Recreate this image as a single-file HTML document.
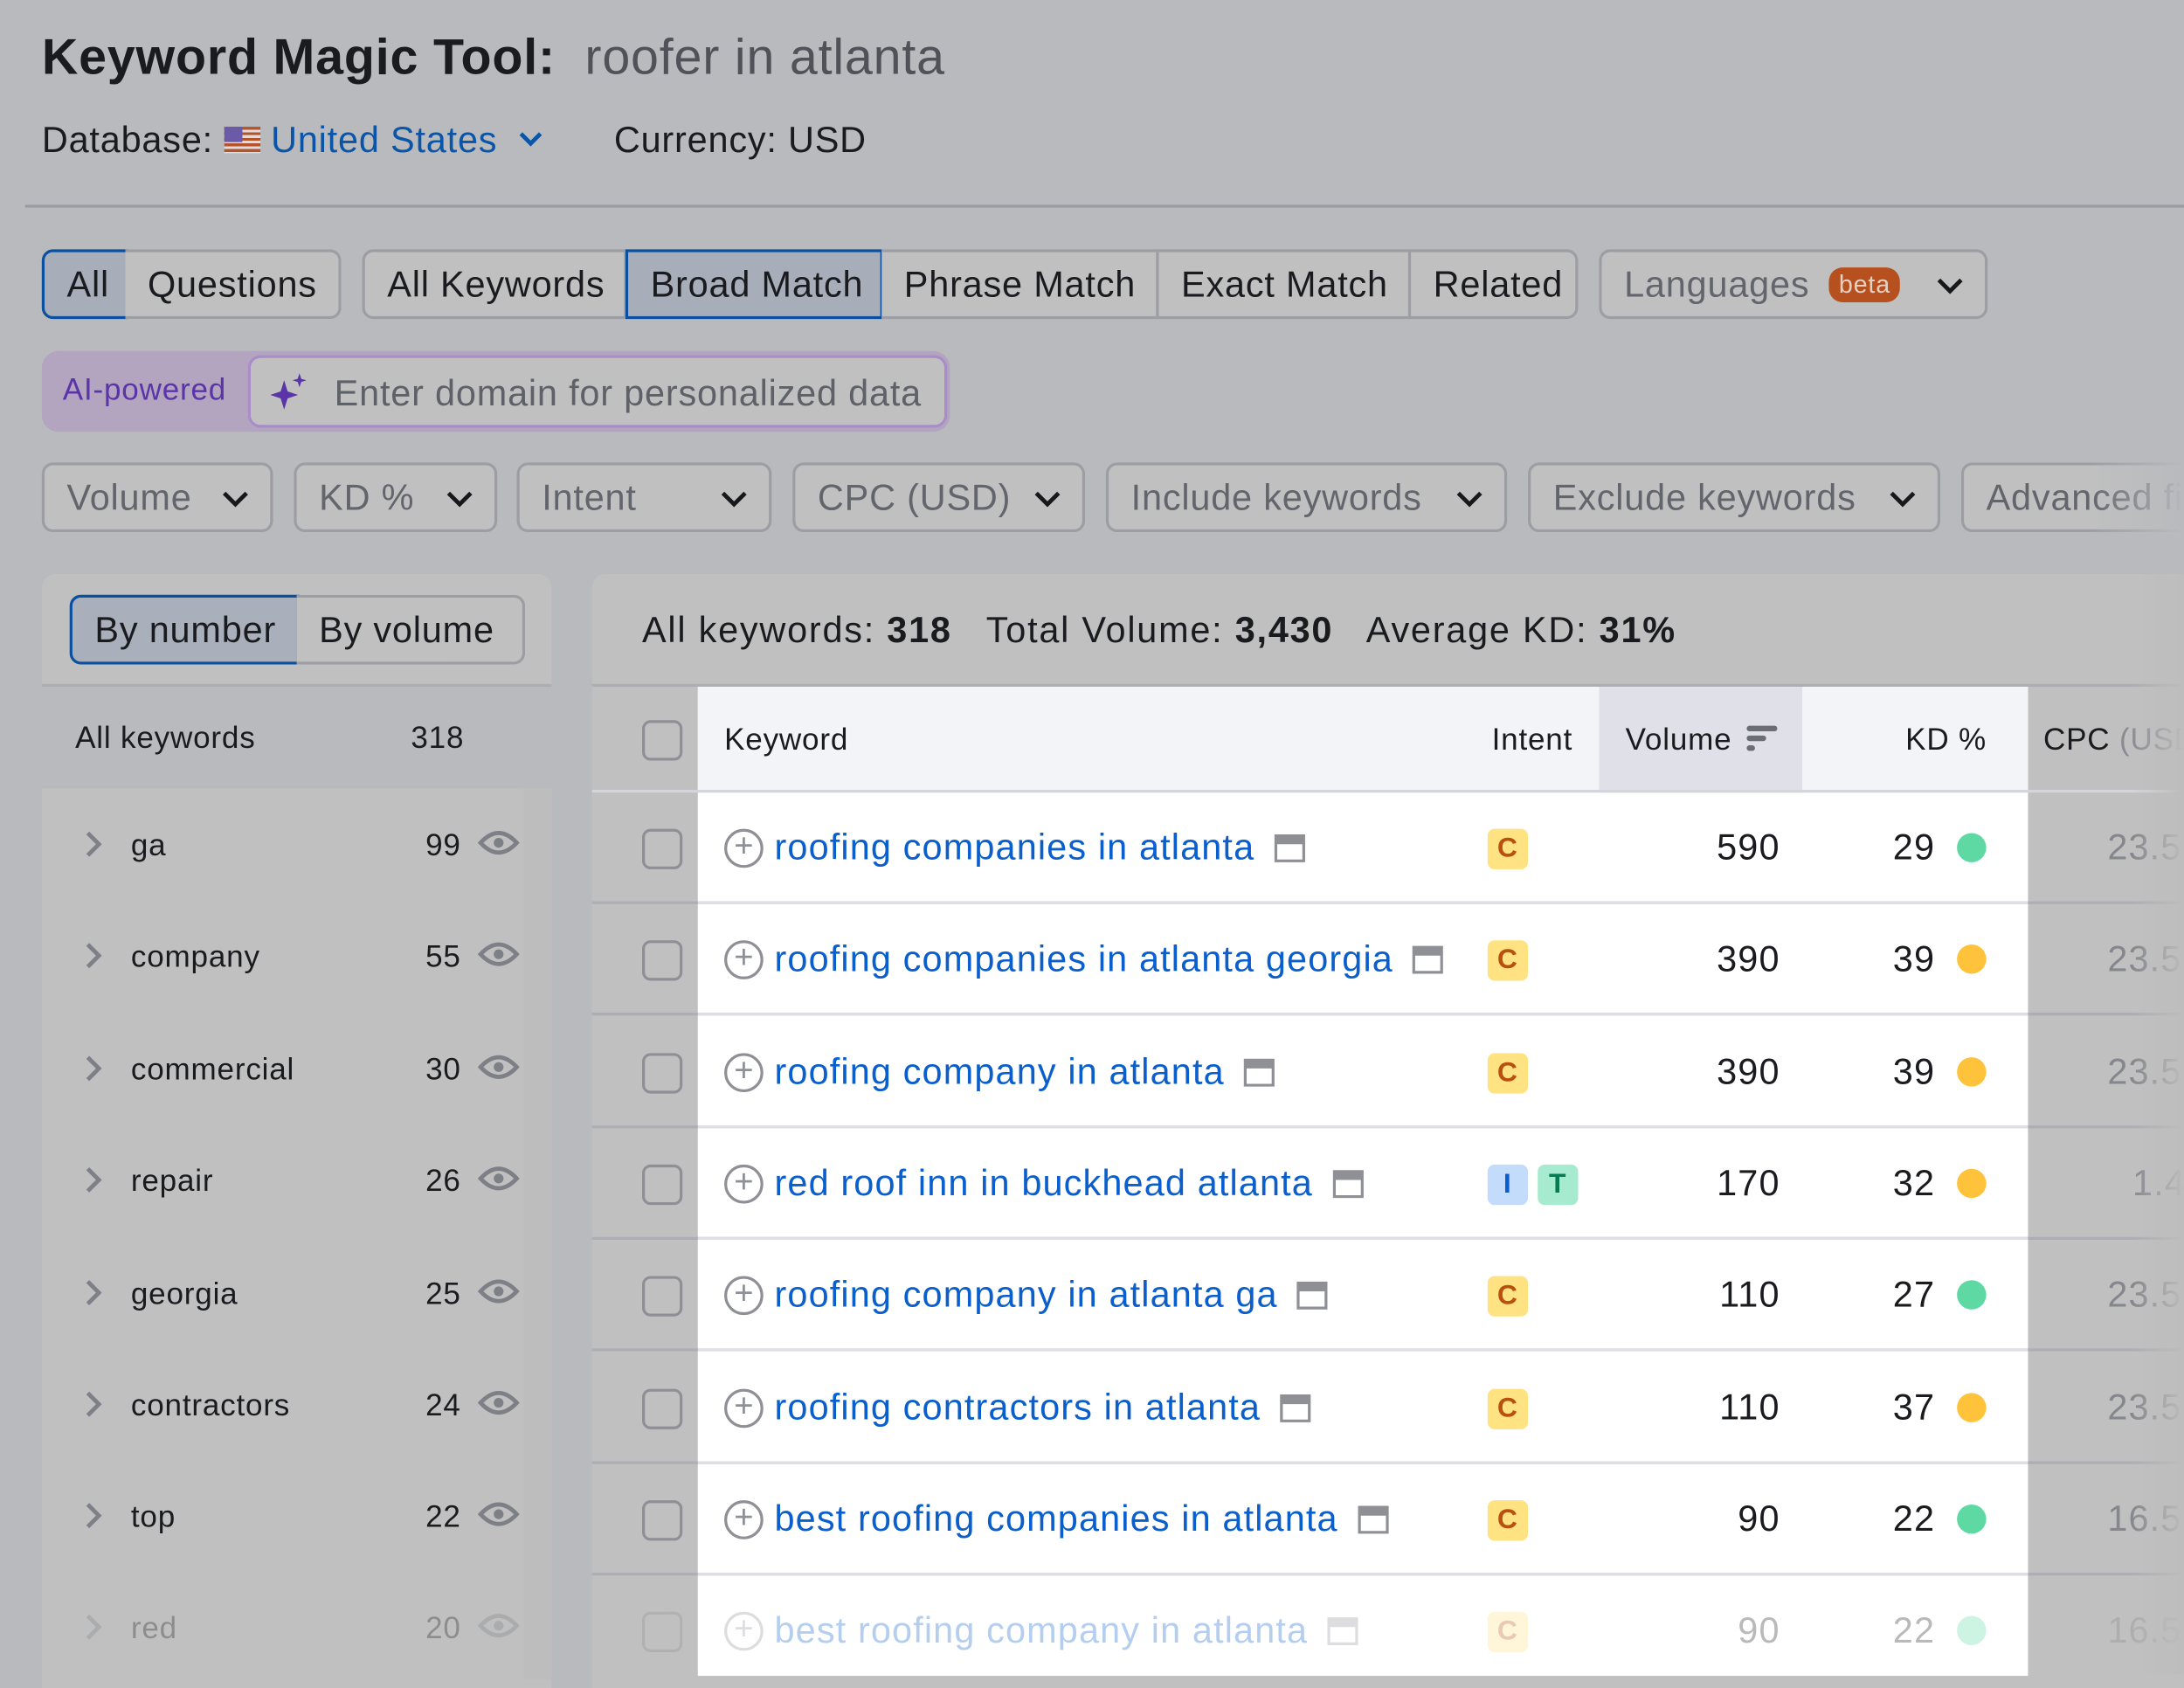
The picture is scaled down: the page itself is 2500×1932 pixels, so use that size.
<!DOCTYPE html>
<html><head><meta charset="utf-8"><style>
*{box-sizing:border-box;margin:0;padding:0}
html,body{width:2500px;height:1905px;overflow:hidden;background:#b9babe}
#s{position:absolute;left:0;top:0;width:1568px;height:1195px;transform:scale(1.5944);transform-origin:0 0;font-family:"Liberation Sans",sans-serif;color:#1a1b1f;letter-spacing:0.5px}
.a{position:absolute}
.btn{position:absolute;height:50px;border:2px solid #9d9ea3;background:#c0c0c0;border-radius:8px;font-size:26px;display:flex;align-items:center;padding-left:16px;white-space:nowrap}
.g{color:#63656d}
.chev{position:absolute;right:14px;top:17px}
.row{position:absolute;left:425px;width:1143px;height:80px;border-bottom:2px solid #adaeb3}
.lrow{position:absolute;left:30px;width:346px;height:80px;font-size:22px}
.ln{position:absolute;left:76px;width:955px;height:2px;bottom:-2px;background:#dfe0e5}
</style></head><body><div id="s">
<div class="a" style="left:30px;top:20px;font-size:36px;font-weight:bold;white-space:nowrap">Keyword Magic Tool:&nbsp; <span style="font-weight:normal;color:#505259">roofer in atlanta</span></div>
<div class="a" style="left:30px;top:85px;font-size:26px;white-space:nowrap">Database: <span style="display:inline-block;width:26px;height:19px;background:repeating-linear-gradient(#b5532a 0 2px,#ddd 2px 4px);position:relative;vertical-align:-1px"><span style="position:absolute;left:0;top:0;width:13px;height:11px;background:#6a5aa8"></span></span> <span style="color:#0a55a8">United States</span> <svg width="20" height="14" viewBox="0 0 20 14" style="vertical-align:2px;margin-left:6px"><polyline points="3,3 10,10 17,3" fill="none" stroke="#0a55a8" stroke-width="3"/></svg><span style="margin-left:50px">Currency: USD</span></div>
<div class="a" style="left:18px;top:147px;width:1550px;height:2px;background:#9a9ba0"></div>

<div class="btn" style="left:30px;top:179px;width:62px;background:#a7adb9;border-color:#0b4fa0;border-radius:8px 0 0 8px">All</div>
<div class="btn" style="left:90px;top:179px;width:155px;border-left:none;border-radius:0 8px 8px 0">Questions</div>
<div class="btn" style="left:260px;top:179px;width:190px;border-radius:8px 0 0 8px">All Keywords</div>
<div class="btn" style="left:449px;top:179px;width:185px;background:#a7adb9;border-color:#0b4fa0;border-radius:0">Broad Match</div>
<div class="btn" style="left:633px;top:179px;width:199px;border-left:none;border-radius:0">Phrase Match</div>
<div class="btn" style="left:830px;top:179px;width:183px;border-radius:0">Exact Match</div>
<div class="btn" style="left:1011px;top:179px;width:122px;border-radius:0 8px 8px 0">Related</div>
<div class="btn g" style="left:1148px;top:179px;width:279px">Languages<span style="background:#b6501e;color:#e6d0c2;font-size:18px;border-radius:10px;padding:2px 7px;margin-left:14px">beta</span><svg class="chev" width="22" height="14" viewBox="0 0 22 14"><polyline points="3,3 11,11 19,3" fill="none" stroke="#17181c" stroke-width="3"/></svg></div>

<div class="a" style="left:30px;top:252px;width:652px;height:58px;background:#b3a4c0;border-radius:12px"></div>
<div class="a" style="left:45px;top:267px;font-size:22px;color:#5b34a8">AI-powered</div>
<div class="a" style="left:178px;top:255px;width:502px;height:52px;background:#c0c0c0;border:2px solid #a98dc8;border-radius:9px;font-size:26px;color:#5f6168;padding:10px 0 0 60px;white-space:nowrap">Enter domain for personalized data
<svg class="a" style="left:14px;top:10px" width="30" height="30" viewBox="0 0 30 30"><path d="M10 6 L12.5 14 L20 16.5 L12.5 19 L10 27 L7.5 19 L0 16.5 L7.5 14Z" fill="#5b34a8"/><path d="M21 1 L22.3 5 L26 6 L22.3 7.2 L21 11 L19.7 7.2 L16 6 L19.7 5Z" fill="#5b34a8"/></svg></div>

<div class="btn g" style="left:30px;top:332px;width:166px">Volume<svg class="chev" width="22" height="14" viewBox="0 0 22 14"><polyline points="3,3 11,11 19,3" fill="none" stroke="#17181c" stroke-width="3"/></svg></div>
<div class="btn g" style="left:211px;top:332px;width:146px">KD %<svg class="chev" width="22" height="14" viewBox="0 0 22 14"><polyline points="3,3 11,11 19,3" fill="none" stroke="#17181c" stroke-width="3"/></svg></div>
<div class="btn g" style="left:371px;top:332px;width:183px">Intent<svg class="chev" width="22" height="14" viewBox="0 0 22 14"><polyline points="3,3 11,11 19,3" fill="none" stroke="#17181c" stroke-width="3"/></svg></div>
<div class="btn g" style="left:569px;top:332px;width:210px">CPC (USD)<svg class="chev" width="22" height="14" viewBox="0 0 22 14"><polyline points="3,3 11,11 19,3" fill="none" stroke="#17181c" stroke-width="3"/></svg></div>
<div class="btn g" style="left:794px;top:332px;width:288px">Include keywords<svg class="chev" width="22" height="14" viewBox="0 0 22 14"><polyline points="3,3 11,11 19,3" fill="none" stroke="#17181c" stroke-width="3"/></svg></div>
<div class="btn g" style="left:1097px;top:332px;width:296px">Exclude keywords<svg class="chev" width="22" height="14" viewBox="0 0 22 14"><polyline points="3,3 11,11 19,3" fill="none" stroke="#17181c" stroke-width="3"/></svg></div>
<div class="btn g" style="left:1408px;top:332px;width:200px;border-right:none">Advanced fi</div>
<div class="a" style="left:1500px;top:330px;width:68px;height:56px;background:linear-gradient(90deg,rgba(185,186,190,0),#b9babe)"></div>

<!-- left panel -->
<div class="a" style="left:30px;top:412px;width:366px;height:800px;background:#c0c0c0;border-radius:10px 10px 0 0"></div>
<div class="btn" style="left:50px;top:427px;width:165px;background:#a9b0bb;border-color:#0b4fa0;border-radius:8px 0 0 8px">By number</div>
<div class="btn" style="left:213px;top:427px;width:164px;border-left:none;border-radius:0 8px 8px 0">By volume</div>
<div class="a" style="left:30px;top:491px;width:366px;height:2px;background:#adaeb3"></div>
<div class="a" style="left:30px;top:493px;width:366px;height:73px;background:#b9babe"></div>
<div class="a" style="left:54px;top:517px;font-size:22px">All keywords</div>
<div class="a" style="left:295px;top:517px;font-size:22px">318</div>
<div class="a" style="left:376px;top:566px;width:20px;height:640px;background:#bdbdbd"></div>

<div class="lrow" style="top:566px"><svg class="a" style="left:30px;top:30px" width="14" height="20"><polyline points="3,2 11,10 3,18" fill="none" stroke="#7e8087" stroke-width="3"/></svg><span class="a" style="left:64px;top:28px">ga</span><span class="a" style="right:45px;top:28px">99</span><svg class="a" style="left:313px;top:27px" width="30" height="24" viewBox="0 0 30 24"><path d="M2 12 Q15 -2 28 12 Q15 26 2 12Z" fill="none" stroke="#7e8087" stroke-width="3"/><circle cx="15" cy="12" r="3.5" fill="#7e8087"/></svg></div>
<div class="lrow" style="top:646px"><svg class="a" style="left:30px;top:30px" width="14" height="20"><polyline points="3,2 11,10 3,18" fill="none" stroke="#7e8087" stroke-width="3"/></svg><span class="a" style="left:64px;top:28px">company</span><span class="a" style="right:45px;top:28px">55</span><svg class="a" style="left:313px;top:27px" width="30" height="24" viewBox="0 0 30 24"><path d="M2 12 Q15 -2 28 12 Q15 26 2 12Z" fill="none" stroke="#7e8087" stroke-width="3"/><circle cx="15" cy="12" r="3.5" fill="#7e8087"/></svg></div>
<div class="lrow" style="top:727px"><svg class="a" style="left:30px;top:30px" width="14" height="20"><polyline points="3,2 11,10 3,18" fill="none" stroke="#7e8087" stroke-width="3"/></svg><span class="a" style="left:64px;top:28px">commercial</span><span class="a" style="right:45px;top:28px">30</span><svg class="a" style="left:313px;top:27px" width="30" height="24" viewBox="0 0 30 24"><path d="M2 12 Q15 -2 28 12 Q15 26 2 12Z" fill="none" stroke="#7e8087" stroke-width="3"/><circle cx="15" cy="12" r="3.5" fill="#7e8087"/></svg></div>
<div class="lrow" style="top:807px"><svg class="a" style="left:30px;top:30px" width="14" height="20"><polyline points="3,2 11,10 3,18" fill="none" stroke="#7e8087" stroke-width="3"/></svg><span class="a" style="left:64px;top:28px">repair</span><span class="a" style="right:45px;top:28px">26</span><svg class="a" style="left:313px;top:27px" width="30" height="24" viewBox="0 0 30 24"><path d="M2 12 Q15 -2 28 12 Q15 26 2 12Z" fill="none" stroke="#7e8087" stroke-width="3"/><circle cx="15" cy="12" r="3.5" fill="#7e8087"/></svg></div>
<div class="lrow" style="top:888px"><svg class="a" style="left:30px;top:30px" width="14" height="20"><polyline points="3,2 11,10 3,18" fill="none" stroke="#7e8087" stroke-width="3"/></svg><span class="a" style="left:64px;top:28px">georgia</span><span class="a" style="right:45px;top:28px">25</span><svg class="a" style="left:313px;top:27px" width="30" height="24" viewBox="0 0 30 24"><path d="M2 12 Q15 -2 28 12 Q15 26 2 12Z" fill="none" stroke="#7e8087" stroke-width="3"/><circle cx="15" cy="12" r="3.5" fill="#7e8087"/></svg></div>
<div class="lrow" style="top:968px"><svg class="a" style="left:30px;top:30px" width="14" height="20"><polyline points="3,2 11,10 3,18" fill="none" stroke="#7e8087" stroke-width="3"/></svg><span class="a" style="left:64px;top:28px">contractors</span><span class="a" style="right:45px;top:28px">24</span><svg class="a" style="left:313px;top:27px" width="30" height="24" viewBox="0 0 30 24"><path d="M2 12 Q15 -2 28 12 Q15 26 2 12Z" fill="none" stroke="#7e8087" stroke-width="3"/><circle cx="15" cy="12" r="3.5" fill="#7e8087"/></svg></div>
<div class="lrow" style="top:1048px"><svg class="a" style="left:30px;top:30px" width="14" height="20"><polyline points="3,2 11,10 3,18" fill="none" stroke="#7e8087" stroke-width="3"/></svg><span class="a" style="left:64px;top:28px">top</span><span class="a" style="right:45px;top:28px">22</span><svg class="a" style="left:313px;top:27px" width="30" height="24" viewBox="0 0 30 24"><path d="M2 12 Q15 -2 28 12 Q15 26 2 12Z" fill="none" stroke="#7e8087" stroke-width="3"/><circle cx="15" cy="12" r="3.5" fill="#7e8087"/></svg></div>
<div class="lrow" style="top:1128px;opacity:.3"><svg class="a" style="left:30px;top:30px" width="14" height="20"><polyline points="3,2 11,10 3,18" fill="none" stroke="#7e8087" stroke-width="3"/></svg><span class="a" style="left:64px;top:28px">red</span><span class="a" style="right:45px;top:28px">20</span><svg class="a" style="left:313px;top:27px" width="30" height="24" viewBox="0 0 30 24"><path d="M2 12 Q15 -2 28 12 Q15 26 2 12Z" fill="none" stroke="#7e8087" stroke-width="3"/><circle cx="15" cy="12" r="3.5" fill="#7e8087"/></svg></div>

<!-- right panel -->
<div class="a" style="left:425px;top:412px;width:1143px;height:800px;background:#c0c0c0;border-radius:10px 0 0 0"></div>
<div class="a" style="left:461px;top:437px;font-size:26px;white-space:nowrap;letter-spacing:1.1px">All keywords: <b>318</b>&nbsp;&nbsp; Total Volume: <b>3,430</b>&nbsp;&nbsp; Average KD: <b>31%</b></div>
<div class="a" style="left:425px;top:491px;width:1143px;height:2px;background:#adaeb3"></div>
<div class="a" style="left:501px;top:493px;width:955px;height:710px;background:#fff"></div>
<div class="a" style="left:501px;top:493px;width:955px;height:76px;background:#f3f4f8"></div>
<div class="a" style="left:1148px;top:493px;width:146px;height:76px;background:#e0e1e8"></div>
<div class="a" style="left:425px;top:567px;width:1143px;height:2px;background:#d4d5da"></div>
<div class="a" style="left:461px;top:517px;width:29px;height:29px;border:2px solid #8e9096;border-radius:6px"></div>
<div class="a" style="left:520px;top:518px;font-size:22px">Keyword</div>
<div class="a" style="left:1071px;top:518px;font-size:22px">Intent</div>
<div class="a" style="left:1167px;top:518px;font-size:22px">Volume</div>
<svg class="a" style="left:1254px;top:520px" width="24" height="20"><rect x="0" y="1" width="22" height="4" rx="2" fill="#6c6e75"/><rect x="0" y="8" width="14" height="4" rx="2" fill="#6c6e75"/><rect x="0" y="15" width="6" height="4" rx="2" fill="#6c6e75"/></svg>
<div class="a" style="left:1368px;top:518px;font-size:22px">KD %</div>
<div class="a" style="left:1467px;top:518px;font-size:22px;white-space:nowrap">CPC <span style="color:#8a8b90">(USD</span></div>

<!-- rows -->
<div class="a" style="left:0;top:0;font-size:26px;letter-spacing:0.7px">
<div class="row" style="top:569px"><div class="ln"></div><div class="a" style="left:36px;top:26px;width:29px;height:29px;border:2px solid #8e9096;border-radius:6px"></div><div class="a" style="left:95px;top:26px;width:28px;height:28px;border:2.5px solid #8e9096;border-radius:50%;color:#8e9096;font-size:24px;line-height:22px;text-align:center;letter-spacing:0">+</div><div class="a" style="left:131px;top:24px;color:#0b5fcc;white-space:nowrap">roofing companies in atlanta <span style="display:inline-block;width:22px;height:20px;border:2.5px solid #8e9096;border-top-width:7px;vertical-align:-2px;margin-left:6px"></span></div><div class="a" style="left:643px;top:26px;width:29px;height:29px;background:#ffe383;border-radius:5px;color:#b8510f;font-size:20px;font-weight:bold;text-align:center;line-height:29px">C</div><div class="a" style="right:290px;top:24px">590</div><div class="a" style="left:934px;top:24px">29</div><div class="a" style="left:980px;top:29px;width:21px;height:21px;border-radius:50%;background:#5ed9a4"></div><div class="a" style="left:1088px;top:24px;color:#85878d">23.5</div></div>
<div class="row" style="top:649px"><div class="ln"></div><div class="a" style="left:36px;top:26px;width:29px;height:29px;border:2px solid #8e9096;border-radius:6px"></div><div class="a" style="left:95px;top:26px;width:28px;height:28px;border:2.5px solid #8e9096;border-radius:50%;color:#8e9096;font-size:24px;line-height:22px;text-align:center;letter-spacing:0">+</div><div class="a" style="left:131px;top:24px;color:#0b5fcc;white-space:nowrap">roofing companies in atlanta georgia <span style="display:inline-block;width:22px;height:20px;border:2.5px solid #8e9096;border-top-width:7px;vertical-align:-2px;margin-left:6px"></span></div><div class="a" style="left:643px;top:26px;width:29px;height:29px;background:#ffe383;border-radius:5px;color:#b8510f;font-size:20px;font-weight:bold;text-align:center;line-height:29px">C</div><div class="a" style="right:290px;top:24px">390</div><div class="a" style="left:934px;top:24px">39</div><div class="a" style="left:980px;top:29px;width:21px;height:21px;border-radius:50%;background:#ffc23b"></div><div class="a" style="left:1088px;top:24px;color:#85878d">23.5</div></div>
<div class="row" style="top:730px"><div class="ln"></div><div class="a" style="left:36px;top:26px;width:29px;height:29px;border:2px solid #8e9096;border-radius:6px"></div><div class="a" style="left:95px;top:26px;width:28px;height:28px;border:2.5px solid #8e9096;border-radius:50%;color:#8e9096;font-size:24px;line-height:22px;text-align:center;letter-spacing:0">+</div><div class="a" style="left:131px;top:24px;color:#0b5fcc;white-space:nowrap">roofing company in atlanta <span style="display:inline-block;width:22px;height:20px;border:2.5px solid #8e9096;border-top-width:7px;vertical-align:-2px;margin-left:6px"></span></div><div class="a" style="left:643px;top:26px;width:29px;height:29px;background:#ffe383;border-radius:5px;color:#b8510f;font-size:20px;font-weight:bold;text-align:center;line-height:29px">C</div><div class="a" style="right:290px;top:24px">390</div><div class="a" style="left:934px;top:24px">39</div><div class="a" style="left:980px;top:29px;width:21px;height:21px;border-radius:50%;background:#ffc23b"></div><div class="a" style="left:1088px;top:24px;color:#85878d">23.5</div></div>
<div class="row" style="top:810px"><div class="ln"></div><div class="a" style="left:36px;top:26px;width:29px;height:29px;border:2px solid #8e9096;border-radius:6px"></div><div class="a" style="left:95px;top:26px;width:28px;height:28px;border:2.5px solid #8e9096;border-radius:50%;color:#8e9096;font-size:24px;line-height:22px;text-align:center;letter-spacing:0">+</div><div class="a" style="left:131px;top:24px;color:#0b5fcc;white-space:nowrap">red roof inn in buckhead atlanta <span style="display:inline-block;width:22px;height:20px;border:2.5px solid #8e9096;border-top-width:7px;vertical-align:-2px;margin-left:6px"></span></div><div class="a" style="left:643px;top:26px;width:29px;height:29px;background:#c4dcfb;border-radius:5px;color:#0b5fcc;font-size:20px;font-weight:bold;text-align:center;line-height:29px">I</div><div class="a" style="left:679px;top:26px;width:29px;height:29px;background:#a6ebd0;border-radius:5px;color:#0a7a55;font-size:20px;font-weight:bold;text-align:center;line-height:29px">T</div><div class="a" style="right:290px;top:24px">170</div><div class="a" style="left:934px;top:24px">32</div><div class="a" style="left:980px;top:29px;width:21px;height:21px;border-radius:50%;background:#ffc23b"></div><div class="a" style="left:1106px;top:24px;color:#85878d">1.4</div></div>
<div class="row" style="top:890px"><div class="ln"></div><div class="a" style="left:36px;top:26px;width:29px;height:29px;border:2px solid #8e9096;border-radius:6px"></div><div class="a" style="left:95px;top:26px;width:28px;height:28px;border:2.5px solid #8e9096;border-radius:50%;color:#8e9096;font-size:24px;line-height:22px;text-align:center;letter-spacing:0">+</div><div class="a" style="left:131px;top:24px;color:#0b5fcc;white-space:nowrap">roofing company in atlanta ga <span style="display:inline-block;width:22px;height:20px;border:2.5px solid #8e9096;border-top-width:7px;vertical-align:-2px;margin-left:6px"></span></div><div class="a" style="left:643px;top:26px;width:29px;height:29px;background:#ffe383;border-radius:5px;color:#b8510f;font-size:20px;font-weight:bold;text-align:center;line-height:29px">C</div><div class="a" style="right:290px;top:24px">110</div><div class="a" style="left:934px;top:24px">27</div><div class="a" style="left:980px;top:29px;width:21px;height:21px;border-radius:50%;background:#5ed9a4"></div><div class="a" style="left:1088px;top:24px;color:#85878d">23.5</div></div>
<div class="row" style="top:971px"><div class="ln"></div><div class="a" style="left:36px;top:26px;width:29px;height:29px;border:2px solid #8e9096;border-radius:6px"></div><div class="a" style="left:95px;top:26px;width:28px;height:28px;border:2.5px solid #8e9096;border-radius:50%;color:#8e9096;font-size:24px;line-height:22px;text-align:center;letter-spacing:0">+</div><div class="a" style="left:131px;top:24px;color:#0b5fcc;white-space:nowrap">roofing contractors in atlanta <span style="display:inline-block;width:22px;height:20px;border:2.5px solid #8e9096;border-top-width:7px;vertical-align:-2px;margin-left:6px"></span></div><div class="a" style="left:643px;top:26px;width:29px;height:29px;background:#ffe383;border-radius:5px;color:#b8510f;font-size:20px;font-weight:bold;text-align:center;line-height:29px">C</div><div class="a" style="right:290px;top:24px">110</div><div class="a" style="left:934px;top:24px">37</div><div class="a" style="left:980px;top:29px;width:21px;height:21px;border-radius:50%;background:#ffc23b"></div><div class="a" style="left:1088px;top:24px;color:#85878d">23.5</div></div>
<div class="row" style="top:1051px"><div class="ln"></div><div class="a" style="left:36px;top:26px;width:29px;height:29px;border:2px solid #8e9096;border-radius:6px"></div><div class="a" style="left:95px;top:26px;width:28px;height:28px;border:2.5px solid #8e9096;border-radius:50%;color:#8e9096;font-size:24px;line-height:22px;text-align:center;letter-spacing:0">+</div><div class="a" style="left:131px;top:24px;color:#0b5fcc;white-space:nowrap">best roofing companies in atlanta <span style="display:inline-block;width:22px;height:20px;border:2.5px solid #8e9096;border-top-width:7px;vertical-align:-2px;margin-left:6px"></span></div><div class="a" style="left:643px;top:26px;width:29px;height:29px;background:#ffe383;border-radius:5px;color:#b8510f;font-size:20px;font-weight:bold;text-align:center;line-height:29px">C</div><div class="a" style="right:290px;top:24px">90</div><div class="a" style="left:934px;top:24px">22</div><div class="a" style="left:980px;top:29px;width:21px;height:21px;border-radius:50%;background:#5ed9a4"></div><div class="a" style="left:1088px;top:24px;color:#85878d">16.5</div></div>
<div class="row" style="top:1131px;opacity:.3;border:none"><div class="a" style="left:36px;top:26px;width:29px;height:29px;border:2px solid #8e9096;border-radius:6px"></div><div class="a" style="left:95px;top:26px;width:28px;height:28px;border:2.5px solid #8e9096;border-radius:50%;color:#8e9096;font-size:24px;line-height:22px;text-align:center;letter-spacing:0">+</div><div class="a" style="left:131px;top:24px;color:#0b5fcc;white-space:nowrap">best roofing company in atlanta <span style="display:inline-block;width:22px;height:20px;border:2.5px solid #8e9096;border-top-width:7px;vertical-align:-2px;margin-left:6px"></span></div><div class="a" style="left:643px;top:26px;width:29px;height:29px;background:#ffe383;border-radius:5px;color:#b8510f;font-size:20px;font-weight:bold;text-align:center;line-height:29px">C</div><div class="a" style="right:290px;top:24px">90</div><div class="a" style="left:934px;top:24px">22</div><div class="a" style="left:980px;top:29px;width:21px;height:21px;border-radius:50%;background:#5ed9a4"></div><div class="a" style="left:1088px;top:24px;color:#85878d">16.5</div></div>
</div>
<div class="a" style="left:1530px;top:412px;width:38px;height:790px;background:linear-gradient(90deg,rgba(192,192,192,0),#bdbdbd)"></div>
</div></body></html>
